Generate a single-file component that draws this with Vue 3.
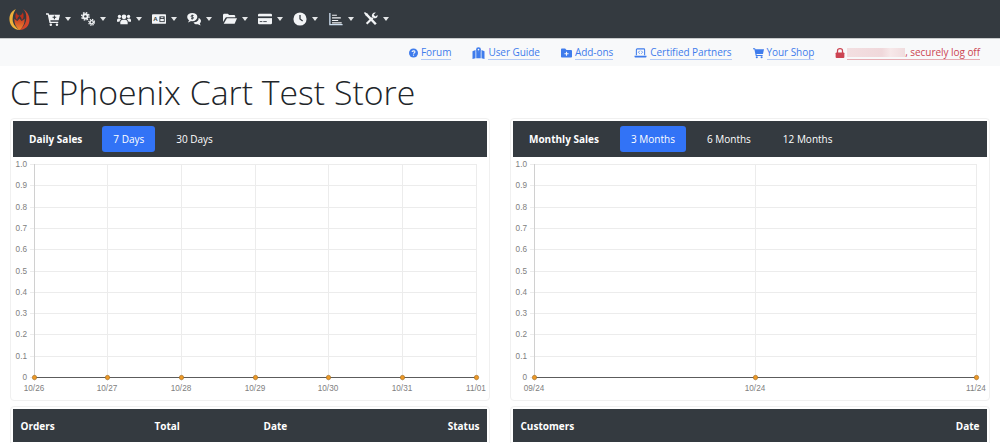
<template>
  <div class="page">
    <nav class="topnav">
      <svg class="logo" viewBox="0 0 20 20" width="21" height="21">
        <defs>
          <linearGradient id="flame" x1="0" y1="0" x2="0" y2="1">
            <stop offset="0" stop-color="#c93a22" />
            <stop offset="1" stop-color="#f08a30" />
          </linearGradient>
        </defs>
        <path d="M6.500 0C2 2 0 6 .5 11c.5 5 4.500 9 9.500 9C5.500 17 3 13 3.500 8.500 3.800 5 5 2.500 6.500 0z" fill="#eeb03a" />
        <path d="M13.500 0c2 2 3.200 5 3 8.500-.2 5-2.500 8.500-6.500 11.500 5.500 0 9.500-4 9.500-9.500 0-4.500-2.500-8.500-6-10.500z" fill="#d2452a" />
        <path d="M5 9c0 5 2 9 5 11 3-2 5-6 5-11-1 1-2 2-3 2.500L10 9l-2 2.500C7 11 6 10 5 9z" fill="url(#flame)" />
        <path d="M6.800 3c-1.300 3.500-.8 6 1 7.500.2-1.500.7-2.500 2.200-4 1.500 1.500 2 2.500 2.200 4 1.800-1.500 2.300-4 1-7.500-.6 1.800-1.500 2.800-3.200 3.400C8.300 5.800 7.400 4.800 6.800 3z" fill="#b8301c" />
      </svg>
      <ul class="menu">
        <li v-for="icon in menuIcons" :key="icon" class="menu-item">
          <svg class="menu-icon" viewBox="0 0 16 16" width="14" height="14" v-html="icons[icon]"></svg>
          <span class="caret"></span>
        </li>
      </ul>
    </nav>

    <div class="linkbar">
      <a v-for="link in links" :key="link.text" class="toplink">
        <svg class="link-icon" viewBox="0 0 16 16" :width="link.w" height="12" v-html="icons[link.icon]"></svg>
        <span class="toplink-text">{{ link.text }}</span>
      </a>
      <a class="toplink toplink--danger">
        <svg class="link-icon" viewBox="0 0 16 16" width="10" height="12" v-html="icons.lock"></svg>
        <span class="toplink-text"><span class="blurred"></span>, securely log off</span>
      </a>
    </div>

    <h1 class="store-title">CE Phoenix Cart Test Store</h1>

    <div class="columns">
      <section v-for="chart in charts" :key="chart.title" class="col">
        <div class="card">
          <div class="card-head">
            <strong class="card-title">{{ chart.title }}</strong>
            <span
              v-for="(tab, i) in chart.tabs"
              :key="tab"
              class="tab"
              :class="{ 'tab--active': i === 0 }"
            >{{ tab }}</span>
          </div>
          <svg class="chart" viewBox="0 0 474 241" width="474" height="241">
            <g class="grid">
              <line v-for="t in ticks" :key="t.label" x1="17" x2="463" :y1="t.y + 0.5" :y2="t.y + 0.5" />
              <line
                v-for="x in xPositions(chart)"
                :key="x"
                :x1="x + 0.5"
                :x2="x + 0.5"
                y1="7"
                y2="224"
              />
            </g>
            <line class="axis" x1="21.500" x2="21.500" y1="7" y2="220" />
            <text v-for="t in ticks" :key="t.label" class="tick" x="14" :y="t.y + 3" text-anchor="end">{{ t.label }}</text>
            <line class="series" x1="21" x2="463" y1="220.500" y2="220.500" />
            <circle v-for="x in xPositions(chart)" :key="'p' + x" class="dot" :cx="x + 0.5" cy="220.500" r="2.200" />
            <text
              v-for="(label, i) in chart.labels"
              :key="label"
              class="tick"
              :x="xPositions(chart)[i]"
              y="234"
              text-anchor="middle"
            >{{ label }}</text>
          </svg>
        </div>
        <div class="card card--table">
          <div class="table-head" :class="{ 'table-head--orders': chart.columns.length > 2 }">
            <span v-for="c in chart.columns" :key="c">{{ c }}</span>
          </div>
        </div>
      </section>
    </div>
  </div>
</template>

<script setup>
const menuIcons = ['cart', 'cogs', 'users', 'idcard', 'comments', 'folder', 'credit', 'clock', 'chart', 'tools']

const icons = {
  cart: '<path fill="currentColor" d="M0 1.500h3l.5 1.500H16l-1.500 6.500H5l.3 1.500H14v1.500H4L2 3H0z"/><circle fill="currentColor" cx="5.500" cy="14.500" r="1.400"/><circle fill="currentColor" cx="12.500" cy="14.500" r="1.400"/><path fill="#343a40" d="M9 4h1.200v1.500h1.500v1.200h-1.500v1.500H9V6.700H7.500V5.500H9z"/>',
  cogs: '<g fill="currentColor"><circle cx="5" cy="5" r="3.500"/><circle cx="12.200" cy="11.800" r="2.700"/></g><g fill="none" stroke="currentColor"><circle cx="5" cy="5" r="4.200" stroke-width="1.600" stroke-dasharray="1.800 1.500"/><circle cx="12.200" cy="11.800" r="3.300" stroke-width="1.400" stroke-dasharray="1.500 1.090"/></g><circle cx="5" cy="5" r="1.400" fill="#343a40"/><circle cx="12.200" cy="11.800" r="1.100" fill="#343a40"/>',
  users: '<g fill="currentColor"><circle cx="8" cy="5.500" r="2.700"/><circle cx="2.800" cy="5" r="1.900"/><circle cx="13.200" cy="5" r="1.900"/><path d="M3.800 14v-2c0-2 1.500-3.200 2.700-3.200h3c1.200 0 2.700 1.200 2.700 3.200v2z"/><path d="M0 11V9.500C0 8 1 7.300 2 7.300h1.500c.4.700.8 1.100 1.300 1.400C3.600 9.300 3 10 2.800 11zM16 11V9.500c0-1.500-1-2.200-2-2.200h-1.500c-.4.700-.8 1.100-1.300 1.400 1.200.6 1.800 1.300 2 2.300z"/></g>',
  idcard: '<rect fill="currentColor" x="0" y="2.500" width="16" height="11" rx="1"/><text x="1.300" y="10.800" font-family="Liberation Sans" font-size="7" font-weight="700" fill="#343a40">A</text><rect x="8.500" y="5" width="6" height="6.500" fill="#343a40"/><rect x="10" y="6" width="3" height="1" fill="currentColor"/><rect x="9.500" y="8" width="4" height="2.500" fill="currentColor"/>',
  comments: '<ellipse fill="currentColor" cx="6" cy="5.800" rx="5.800" ry="4.800"/><path fill="currentColor" d="M2.500 9 1.200 12l3.500-1.800z"/><path fill="currentColor" d="M13.200 6.800c1.800.8 2.800 2 2.800 3.500 0 1.100-.5 2-1.400 2.700l1 2.500-3.200-1.600c-2 .4-4-.3-5-2 3.800-.1 6.400-2.300 5.800-5.100z"/><path fill="none" stroke="#343a40" stroke-width="1" d="M7.500 4H5.500c-1.100 0-1.100 1.800 0 1.800h1.100c1.100 0 1.100 1.800 0 1.800H4.600M6 3v5.600"/>',
  folder: '<path fill="currentColor" d="M0 3.500C0 2.700.7 2 1.500 2h4L7 3.500h5.500c.8 0 1.500.7 1.500 1.500v1H4.500C3.500 6 2.700 6.500 2.300 7.300L0 11.500z"/><path fill="currentColor" d="M4.500 7H16l-2.700 6.500H.8z"/>',
  credit: '<rect fill="currentColor" x="0" y="2" width="16" height="12" rx="1.500"/><rect x="0" y="5" width="16" height="2" fill="#343a40"/><rect x="2" y="10.500" width="3" height="1" fill="#343a40"/><rect x="6" y="10.500" width="4" height="1" fill="#343a40"/>',
  clock: '<circle fill="currentColor" cx="8" cy="8" r="7.500"/><path fill="none" stroke="#343a40" stroke-width="1.500" d="M8 3.500V8l3 2.200"/>',
  chart: '<path fill="none" stroke="#cfe0f0" stroke-width="1.500" d="M1 1v13.500h14.500"/><path fill="currentColor" d="M3.500 3h5.500v1.400H3.500zM3.500 6h10v1.400h-10zM3.500 9h7v1.400h-7zM3.500 11.800h11v1.200h-11z"/>',
  tools: '<path fill="none" stroke="currentColor" stroke-width="2.800" d="M2.500 2.500 13.500 14"/><path fill="none" stroke="currentColor" stroke-width="2.400" d="M3 13.500 10 6.500"/><path fill="currentColor" d="M15.500 3.500c.5 2-1.500 4.500-4 3.500L9 5c-.5-2.500 1.500-5 4.500-4.500L11 3l2 2zM1 0l3 2v2H2L0 1z"/>',
  question: '<circle fill="currentColor" cx="8" cy="8" r="8"/><path fill="none" stroke="#f8f9fa" stroke-width="2" d="M5.500 6.200C5.500 3.500 10.500 3.500 10.500 6c0 2-2.500 1.800-2.500 3.500"/><rect x="7" y="10.800" width="2" height="2" fill="#f8f9fa"/>',
  guide: '<path fill="currentColor" d="M0 5.500l4-1.500v11l-4 1zM16 5.500l-4-1.500v11l4 1zM5 4.500h1.300L8 7l1.700-2.500H11V15H5z"/><circle fill="currentColor" cx="8" cy="3.500" r="3.300"/><circle fill="#f8f9fa" cx="8" cy="3.500" r="1.100"/>',
  addon: '<path fill="currentColor" d="M0 3c0-.8.700-1.500 1.500-1.500H6L8 3.500h6.500c.8 0 1.500.7 1.500 1.500v8c0 .8-.7 1.500-1.500 1.500h-13C.7 14.500 0 13.800 0 13z"/><path fill="#f8f9fa" d="M7.200 6h1.600v2.200H11v1.600H8.800V12H7.200V9.800H5V8.200h2.200z"/>',
  partner: '<path fill="none" stroke="currentColor" stroke-width="1.400" d="M2.500 11V3.500c0-.5.500-1 1-1h9c.5 0 1 .5 1 1V11"/><path fill="currentColor" d="M0 11.500h16v1c0 .8-.7 1.500-1.500 1.500h-13C.7 14 0 13.300 0 12.500z"/><path fill="none" stroke="currentColor" stroke-width="1" d="M7 5 5.200 7 7 9M9 5l1.800 2L9 9"/>',
  shop: '<path fill="currentColor" d="M0 1h3l.5 1.500H16l-1.500 7H5l.3 1.500H14v1.500H4L2 2.500H0z"/><circle fill="currentColor" cx="5.500" cy="14.300" r="1.500"/><circle fill="currentColor" cx="12.500" cy="14.300" r="1.500"/>',
  lock: '<path fill="none" stroke="currentColor" stroke-width="2" d="M4 8V4.500c0-4.500 8-4.500 8 0V8"/><rect fill="currentColor" x="1" y="7" width="14" height="9" rx="1.500"/>'
}

const links = [
  { text: 'Forum', icon: 'question', w: 9 },
  { text: 'User Guide', icon: 'guide', w: 13 },
  { text: 'Add-ons', icon: 'addon', w: 11 },
  { text: 'Certified Partners', icon: 'partner', w: 13 },
  { text: 'Your Shop', icon: 'shop', w: 11 }
]

const ticks = Array.from({ length: 11 }, (_, i) => ({
  label: i === 10 ? '0' : (1 - i / 10).toFixed(1),
  y: Math.round(7 + i * 21.3)
}))

const charts = [
  {
    title: 'Daily Sales',
    tabs: ['7 Days', '30 Days'],
    labels: ['10/26', '10/27', '10/28', '10/29', '10/30', '10/31', '11/01'],
    columns: ['Orders', 'Total', 'Date', 'Status']
  },
  {
    title: 'Monthly Sales',
    tabs: ['3 Months', '6 Months', '12 Months'],
    labels: ['09/24', '10/24', '11/24'],
    columns: ['Customers', 'Date']
  }
]

function xPositions(chart) {
  const n = chart.labels.length - 1
  return chart.labels.map((_, i) => Math.floor(21 + (442 * i) / n))
}
</script>

<style>
html, body { margin: 0; height: 443px; overflow: hidden; background: #fff; }
</style>

<style scoped>
.page { width: 1000px; height: 443px; overflow: hidden; font-family: "Open Sans", sans-serif; }

.topnav { display: flex; align-items: center; height: 39px; box-sizing: border-box; padding-left: 9px; background: #343a40; border-bottom: 1px solid #c8cacc; }
.logo { flex: none; }
.menu { display: flex; list-style: none; margin: 0 0 0 11px; padding: 0; }
.menu-item { display: flex; align-items: center; width: 35.350px; padding-left: 5px; box-sizing: border-box; color: #f2f4f6; }
.menu-icon { flex: none; }
.caret { margin-left: 5px; border-top: 4px solid #e4e6e8; border-left: 3.500px solid transparent; border-right: 3.500px solid transparent; }

.linkbar { display: flex; justify-content: flex-end; align-items: center; gap: 21px; height: 27px; padding-right: 20px; background: #f8f9fa; }
.toplink { display: flex; align-items: center; gap: 3px; color: #3f7cec; font-size: 10px; }
.toplink-text { line-height: 13px; border-bottom: 1px solid #b4cbf6; letter-spacing: -0.050px; }
.toplink--danger { color: #cc4452; gap: 2px; }
.toplink--danger .toplink-text { border-bottom-color: #e6adb3; }
.blurred { display: inline-block; width: 58px; height: 9px; vertical-align: -1px; background: linear-gradient(90deg, #f3dfe1, #f0d8db 60%, #f7e8e9 75%, #f0dcde); }
.link-icon { flex: none; }

.store-title { margin: 0; padding-left: 10px; height: 52px; font-size: 33.800px; line-height: 52px; font-weight: 300; color: #212529; }

.columns { display: grid; grid-template-columns: 480px 480px; gap: 20px; padding: 0 10px; }
.col { display: flex; flex-direction: column; gap: 5px; min-width: 0; }
.card { box-sizing: border-box; padding: 2px; height: 283px; border: 1px solid #f0f0f0; border-radius: 4px; background: #fff; }
.card--table { height: 60px; }
.card-head { display: flex; align-items: center; gap: 10px; height: 36px; padding-left: 16px; background: #343a40; color: #fff; font-size: 10px; }
.card-title { min-width: 71px; margin-right: 10px; font-weight: 700; }
.col:first-child .card-title { min-width: 0; }
.tab { padding: 0 11px; line-height: 26px; border-radius: 3px; }
.tab--active { background: #3273f6; }
.chart { display: block; }
.grid line { stroke: #ececec; stroke-width: 1; }
.axis { stroke: #d0d0d0; stroke-width: 1; }
.series { stroke: #5c5c5c; stroke-width: 1; }
.dot { fill: #ee9a28; stroke: #8a5a16; stroke-width: 0.500; }
.tick { font-family: "Liberation Sans", sans-serif; font-size: 8.200px; fill: #808080; }

.table-head { display: flex; align-items: center; justify-content: space-between; height: 33px; padding: 0 7.500px; background: #343a40; color: #fff; font-size: 10px; font-weight: 700; }
.table-head--orders { display: grid; grid-template-columns: 134px 109px 1fr auto; }
</style>
